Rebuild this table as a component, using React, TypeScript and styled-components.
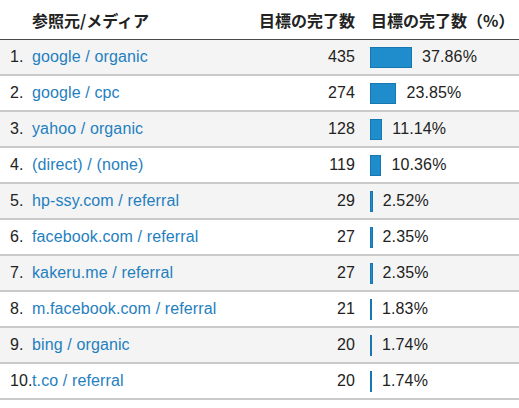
import React from "react";
import styled, { createGlobalStyle } from "styled-components";

const Global = createGlobalStyle`
  html, body { margin: 0; padding: 0; background: #ffffff; }
  body { font-family: "Liberation Sans", Arial, sans-serif; }
`;

const Table = styled.div`
  width: 519px;
  display: flex;
  flex-direction: column;
`;

const HeaderRow = styled.div`
  display: grid;
  grid-template-columns: 22px 1fr 60px 164px;
  align-items: center;
  height: 39px;
  padding-left: 10px;
  border-bottom: 1px solid #4a4a4a;
  font-family: "Noto Sans CJK JP", "Liberation Sans", sans-serif;
  font-weight: 700;
  font-size: 16px;
  color: #222;
  white-space: nowrap;
`;

const HeadCell = styled.div<{ $col: number; $align?: "start" | "end" }>`
  grid-column: ${(p) => p.$col};
  justify-self: ${(p) => p.$align ?? "start"};
  padding-left: ${(p) => (p.$col === 4 ? "16px" : "0")};
`;

const Row = styled.div<{ $striped: boolean }>`
  display: grid;
  grid-template-columns: 22px 1fr 60px 164px;
  align-items: center;
  height: 34px;
  padding-left: 10px;
  background: ${(p) => (p.$striped ? "#f4f4f4" : "#ffffff")};
  border-bottom: 2px solid #cacaca;
  font-size: 16px;
  letter-spacing: 0.12px;
  color: #222;
  white-space: nowrap;
`;

const Index = styled.span`
  color: #222;
`;

const Source = styled.a`
  color: #1f80c0;
  text-decoration: none;
`;

const Count = styled.span`
  justify-self: end;
`;

const BarCell = styled.div`
  display: flex;
  align-items: center;
  gap: 10px;
  padding-left: 15px;
`;

const Bar = styled.div`
  height: 21px;
  box-sizing: border-box;
  background: #1f8dcb;
  border: 1px solid #1877b0;
`;

const Pct = styled.span`
  color: #222;
`;

const data = [
  { name: "google / organic", count: 435, pct: 37.86 },
  { name: "google / cpc", count: 274, pct: 23.85 },
  { name: "yahoo / organic", count: 128, pct: 11.14 },
  { name: "(direct) / (none)", count: 119, pct: 10.36 },
  { name: "hp-ssy.com / referral", count: 29, pct: 2.52 },
  { name: "facebook.com / referral", count: 27, pct: 2.35 },
  { name: "kakeru.me / referral", count: 27, pct: 2.35 },
  { name: "m.facebook.com / referral", count: 21, pct: 1.83 },
  { name: "bing / organic", count: 20, pct: 1.74 },
  { name: "t.co / referral", count: 20, pct: 1.74 },
];

export default function App() {
  return (
    <>
      <Global />
      <Table>
        <HeaderRow>
          <HeadCell $col={2}>参照元/メディア</HeadCell>
          <HeadCell $col={3} $align="end">目標の完了数</HeadCell>
          <HeadCell $col={4}>目標の完了数（%）</HeadCell>
        </HeaderRow>
        {data.map((d, i) => (
          <Row key={i} $striped={i % 2 === 0}>
            <Index>{i + 1}.</Index>
            <Source href="#">{d.name}</Source>
            <Count>{d.count}</Count>
            <BarCell>
              <Bar style={{ width: `${Math.max(2, (d.pct / 37.86) * 42)}px` }} />
              <Pct>{d.pct.toFixed(2)}%</Pct>
            </BarCell>
          </Row>
        ))}
      </Table>
    </>
  );
}
